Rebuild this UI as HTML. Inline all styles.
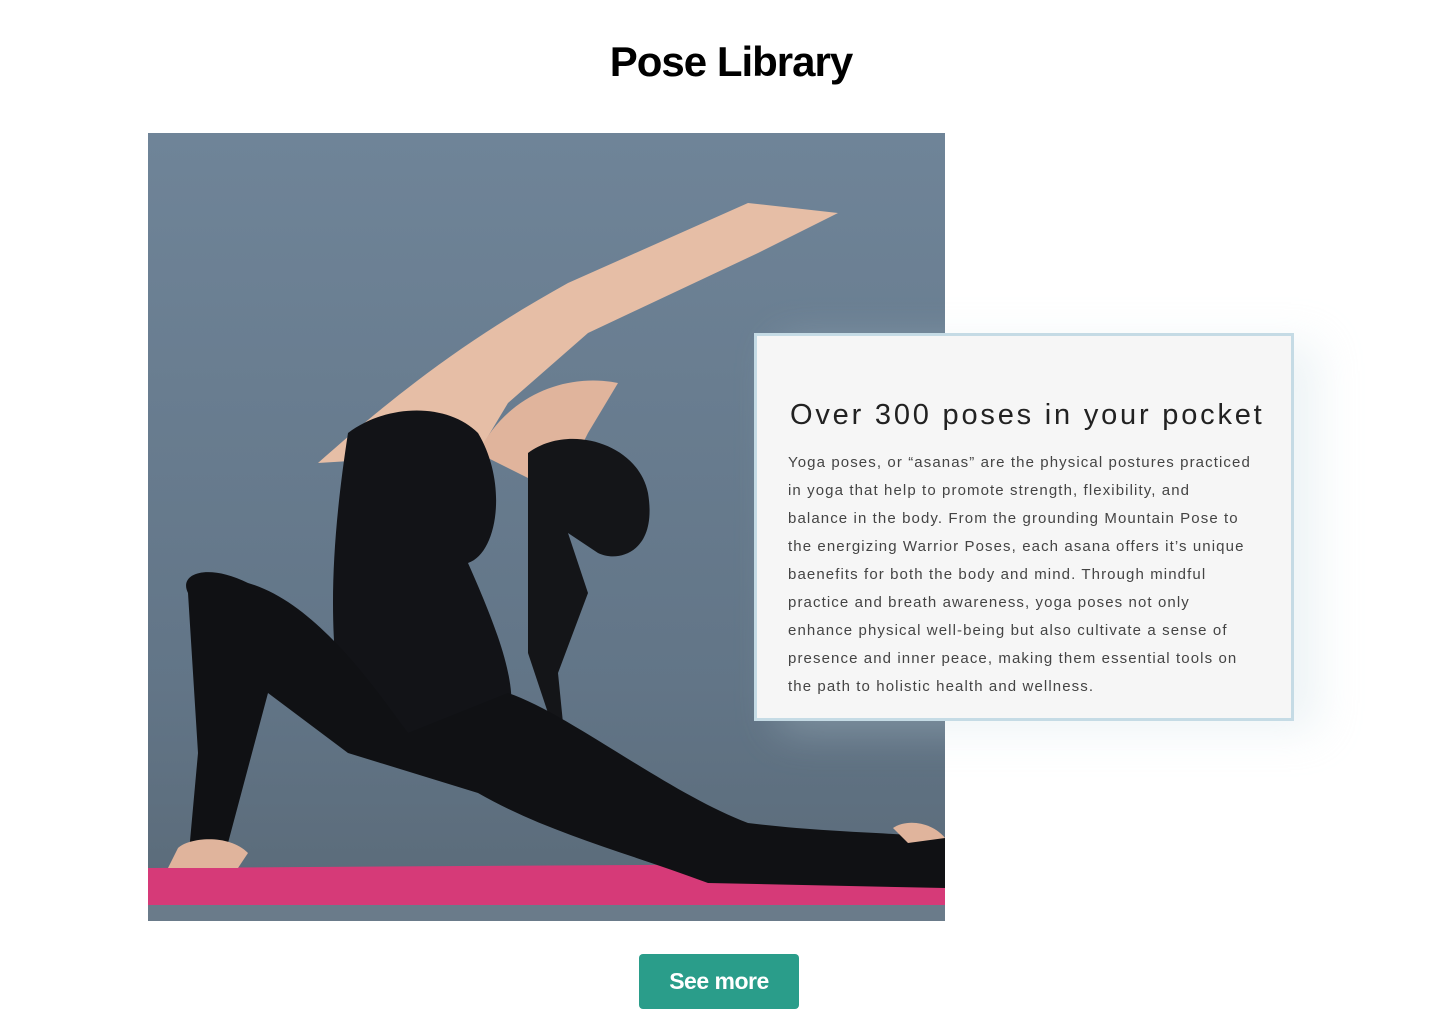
<!DOCTYPE html>
<html><head><meta charset="utf-8"><style>
body{margin:0;background:#fff;width:1440px;height:1024px;position:relative;overflow:hidden}
h1{position:absolute;top:38px;left:0;width:1462px;text-align:center;margin:0;font:bold 42px "Liberation Sans",sans-serif;letter-spacing:-1px;color:#000}
.photo{position:absolute;left:148px;top:133px;width:797px;height:788px}
.card{position:absolute;left:754px;top:333px;width:534px;height:382px;border:3px solid #c5dbe5;background:#f6f6f6;box-shadow:25px 10px 40px rgba(200,220,225,.3)}
.card h2{position:absolute;left:33px;top:63px;margin:0;font:400 29px "Liberation Sans",sans-serif;letter-spacing:2.8px;color:#222;white-space:nowrap}
.card p{position:absolute;left:31px;top:113px;margin:0;font:15px/28px "Liberation Sans",sans-serif;letter-spacing:1.1px;color:#444;white-space:nowrap}
.btn{position:absolute;left:639px;top:954px;width:160px;height:55px;background:#2a9d8a;border-radius:4px;color:#fff;font:bold 23px/55px "Liberation Sans",sans-serif;text-align:center;letter-spacing:-.5px}
</style></head><body>
<h1>Pose Library</h1>
<svg class="photo" viewBox="0 0 797 788">
<defs><linearGradient id="bg" x1="0" y1="0" x2="0" y2="1"><stop offset="0" stop-color="#6f8498"/><stop offset=".7" stop-color="#627587"/><stop offset="1" stop-color="#5a6a78"/></linearGradient></defs>
<rect width="797" height="788" fill="url(#bg)"/>
<path d="M0 735 L797 730 L797 772 L0 772Z" fill="#d63a78"/>
<path d="M0 772 L797 772 L797 788 L0 788Z" fill="#6a7b8a"/>
<path d="M170 330 C260 250 330 200 420 150 L600 70 L690 80 L610 120 L440 200 L360 270 L330 320Z" fill="#e6bea6"/>
<path d="M330 320 C360 260 420 240 470 250 L440 300 L410 360Z" fill="#e0b49c"/>
<path d="M380 320 C420 290 490 310 500 360 C510 420 470 430 450 420 L420 400 L440 460 L410 540 L420 640 L380 520Z" fill="#141518"/>
<path d="M200 300 C240 270 300 270 330 300 C360 350 350 420 320 430 C360 520 370 560 360 600 L200 610 C180 520 180 430 200 300Z" fill="#121317"/>
<path d="M40 460 C30 440 60 430 100 450 C170 470 230 560 260 600 L360 560 C420 580 520 660 600 690 C680 700 760 700 797 705 L797 755 L560 750 C480 720 400 700 330 660 L200 620 L120 560 L80 710 L70 730 L40 730 L50 620Z" fill="#101114"/>
<path d="M30 715 C40 705 80 700 100 720 L90 735 L20 735Z" fill="#e0b49c"/>
<path d="M745 695 C760 685 785 690 797 705 L760 710Z" fill="#e0b49c"/>
</svg>
<div class="card"><h2>Over 300 poses in your pocket</h2>
<p>Yoga poses, or “asanas” are the physical postures practiced<br>in yoga that help to promote strength, flexibility, and<br>balance in the body. From the grounding Mountain Pose to<br>the energizing Warrior Poses, each asana offers it’s unique<br>baenefits for both the body and mind. Through mindful<br>practice and breath awareness, yoga poses not only<br>enhance physical well-being but also cultivate a sense of<br>presence and inner peace, making them essential tools on<br>the path to holistic health and wellness.</p></div>
<div class="btn">See more</div>
</body></html>
